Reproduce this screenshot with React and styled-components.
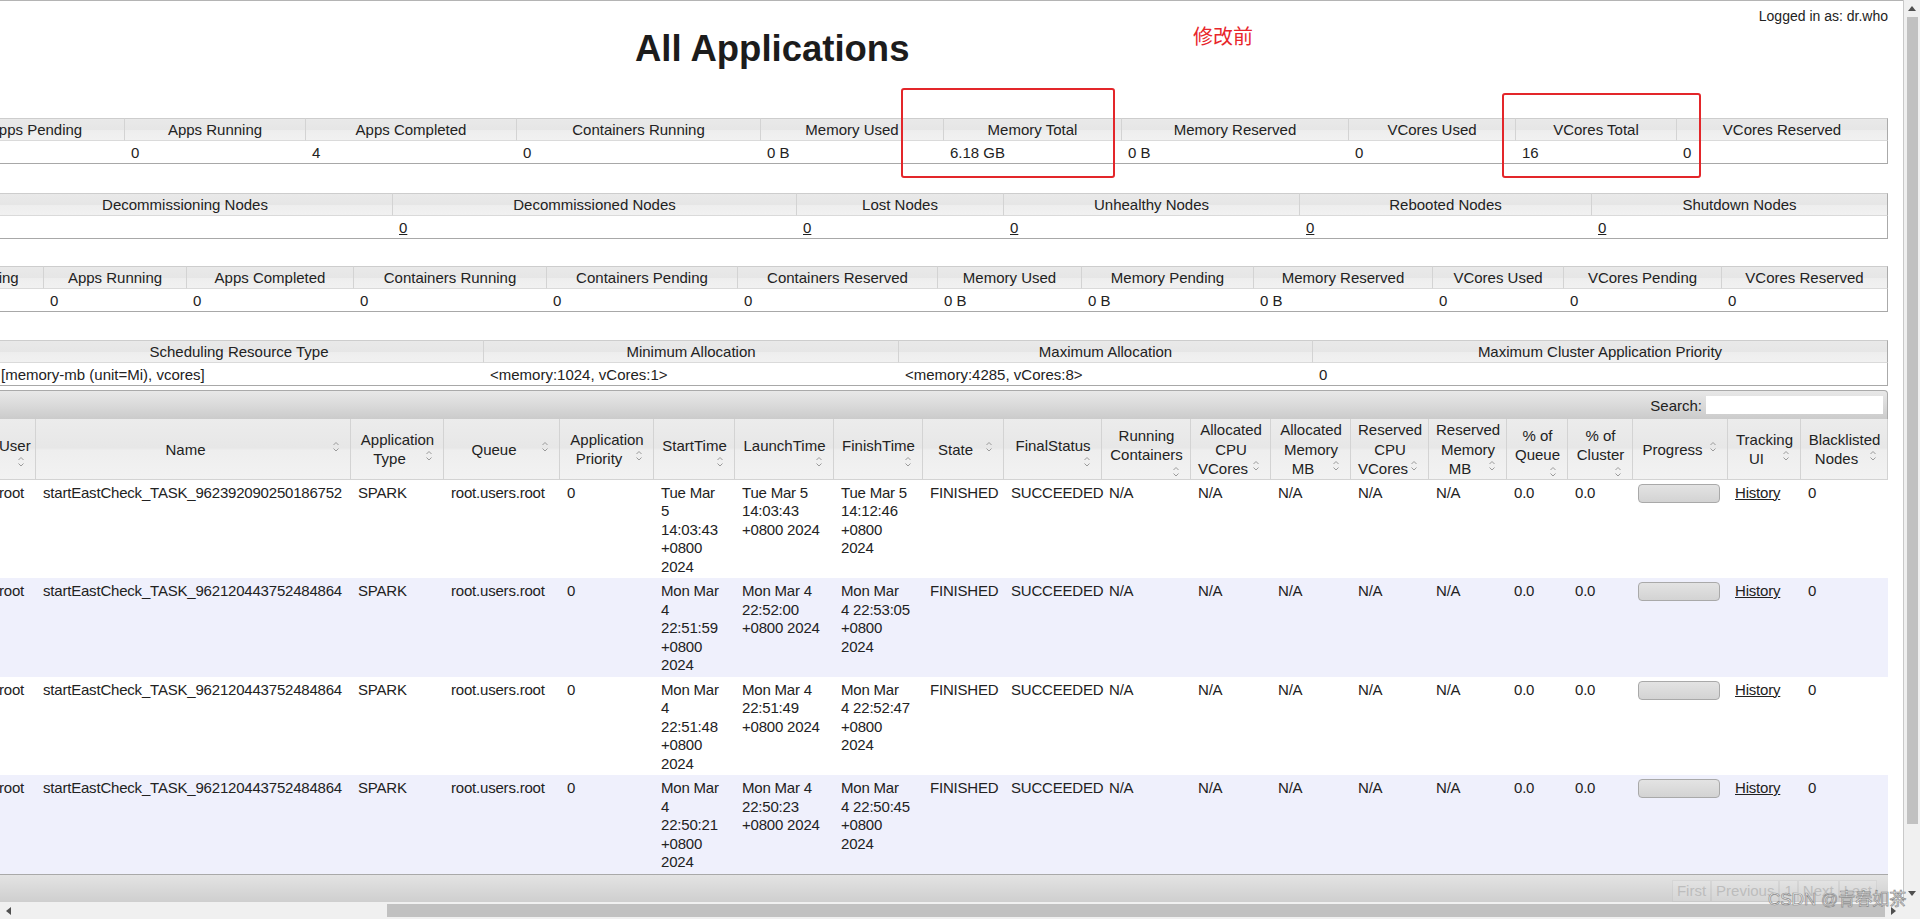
import React from 'react';
import styled, { createGlobalStyle } from 'styled-components';

const GlobalStyle = createGlobalStyle`
  html, body {
    margin: 0;
    padding: 0;
    background: #fff;
    overflow: hidden;
  }
  body {
    font-family: "Liberation Sans", "Noto Sans CJK SC", Arial, sans-serif;
    font-size: 15px;
    color: #222;
  }
`;

// outer frame: page + browser scrollbars
const Screen = styled.div`
  position: relative;
  width: 1920px;
  height: 919px;
  display: grid;
  grid-template-columns: 1903px 17px;
  grid-template-rows: 902px 17px;
  overflow: hidden;
`;

const Viewport = styled.div`
  position: relative;
  overflow: hidden;
  border-top: 1px solid #b4b4b4;
  background: #fff;
`;

// the page is scrolled to the right, so its left part sits outside the view
const Page = styled.div`
  width: 2350px;
  margin-left: -462px;
`;

const Header = styled.div`
  height: 117px;
  display: flex;
  justify-content: space-between;
  align-items: flex-start;
`;

const Title = styled.h1`
  margin: 28px 0 0 1097px;
  font-size: 36.5px;
  line-height: 40px;
  font-weight: bold;
  color: #1c1c1c;
`;

const LoggedIn = styled.div`
  margin-top: 7px;
  font-size: 14px;
  line-height: 16px;
  color: #222;
`;

const InfoTable = styled.table`
  width: 100%;
  table-layout: fixed;
  border-collapse: separate;
  border-spacing: 0;
  margin-bottom: ${(p) => p.$mb}px;
`;

const Col = styled.col`
  width: ${(p) => p.$w}px;
`;

const InfoHead = styled.th`
  font-weight: normal;
  font-size: 15px;
  line-height: 20px;
  padding: 1px 4px 0;
  text-align: center;
  white-space: nowrap;
  color: #222;
  background: linear-gradient(#e9e9e9, #e6e6e6 50%, #eeeeee 55%, #f1f1f1);
  border-top: 1px solid #cdcdcd;
  border-bottom: 1px solid #dadada;
  border-left: 1px solid #d3d3d3;
  &:last-child {
    border-right: 1px solid #aaa;
  }
`;

const InfoCell = styled.td`
  line-height: 20px;
  padding: 2px 7px 0;
  white-space: nowrap;
  overflow: hidden;
  background: #fff;
  border-bottom: 1px solid #a8a8a8;
  &:last-child {
    border-right: 1px solid #aaa;
  }
`;

const NodeLink = styled.a`
  color: #222;
  text-decoration: underline;
`;

const Toolbar = styled.div`
  height: 28px;
  display: flex;
  align-items: center;
  justify-content: flex-end;
  gap: 4px;
  padding-right: 4px;
  border: 1px solid #aaa;
  border-bottom: none;
  border-radius: 4px 4px 0 0;
  background: linear-gradient(#e8e8e8, #dadada 50%, #cbcbcb);
`;

const SearchInput = styled.input`
  width: 173px;
  height: 18px;
  border: none;
  padding: 0 2px;
  background: #fff;
  outline: none;
`;

const GridTable = styled.table`
  width: 100%;
  table-layout: fixed;
  border-collapse: separate;
  border-spacing: 0;
`;

const GridHead = styled.th`
  font-weight: normal;
  line-height: 19.5px;
  padding: 1px 6px 0 7px;
  text-align: center;
  vertical-align: middle;
  white-space: nowrap;
  color: #222;
  background: linear-gradient(#ececec, #e7e7e7 48%, #eeeeee 52%, #f2f2f2);
  border-left: 1px solid #d3d3d3;
  border-bottom: 1px solid #d3d3d3;
  &:last-child {
    border-right: 1px solid #d3d3d3;
  }
`;

const Line = styled.div`
  white-space: nowrap;
`;

const SortIcon = styled.span`
  float: right;
  display: block;
  width: 16px;
  height: 16px;
  margin-bottom: ${(p) => (p.$own ? -8 : 0)}px;
`;

const GridRow = styled.tr`
  background: ${(p) => (p.$even ? '#eff0fc' : '#fff')};
`;

const GridCell = styled.td`
  vertical-align: top;
  line-height: 18.5px;
  padding: 4px 7px 2px 8px;
  white-space: nowrap;
  letter-spacing: -0.2px;
`;

const ProgressBar = styled.div`
  width: 80px;
  height: 17px;
  margin-left: -2px;
  border: 1px solid #a9a9a9;
  border-radius: 4px;
  background: linear-gradient(#e3e3e3, #d3d3d3);
`;

const HistoryLink = styled.a`
  color: #222;
  text-decoration: underline;
`;

const Footer = styled.div`
  height: 30px;
  display: flex;
  justify-content: flex-end;
  align-items: flex-start;
  padding: 5px 11px 0 0;
  border-top: 1px solid #a9a9a9;
  background: linear-gradient(#e3e3e3, #d6d6d6 50%, #c9c9c9);
`;

const PageButton = styled.span`
  line-height: 20px;
  padding: 0 4px;
  color: #bdbdbd;
  border: 1px solid rgba(0, 0, 0, 0.05);
  background: rgba(255, 255, 255, 0.12);
`;

const VScroll = styled.div`
  display: flex;
  flex-direction: column;
  align-items: center;
  background: #f0f0f0;
  border-left: 1px solid #c9c9c9;
`;

const VThumb = styled.div`
  width: 11px;
  height: 807px;
  background: #c1c1c1;
`;

const HScroll = styled.div`
  display: flex;
  align-items: center;
  background: #f0f0f0;
`;

const HThumb = styled.div`
  width: 1498px;
  height: 13px;
  margin-left: 370px;
  background: #c1c1c1;
`;

const Arrow = styled.div`
  width: 17px;
  height: 17px;
  flex: none;
  display: flex;
  align-items: center;
  justify-content: center;
  margin-top: ${(p) => (p.$end ? 'auto' : '0')};
`;

const Corner = styled.div`
  background: #f0f0f0;
`;

// annotations drawn over the screenshot
const RedBox = styled.div`
  position: absolute;
  left: ${(p) => p.$x}px;
  top: ${(p) => p.$y}px;
  width: ${(p) => p.$w}px;
  height: ${(p) => p.$h}px;
  border: 2px solid #e3262a;
  border-radius: 3px;
  pointer-events: none;
`;

const RedNote = styled.div`
  position: absolute;
  left: 1193px;
  top: 24px;
  font-family: "Noto Sans CJK SC", sans-serif;
  font-size: 20px;
  line-height: 22px;
  color: #e8262b;
`;

const Watermark = styled.div`
  position: absolute;
  left: 1768px;
  top: 889px;
  font-family: "Liberation Sans", "Noto Sans CJK SC", sans-serif;
  font-size: 17px;
  line-height: 22px;
  color: rgba(250, 250, 250, 0.85);
  -webkit-text-stroke: 0.7px #8a8a8a;
  pointer-events: none;
`;

const clusterMetrics = [
  ['Apps Submitted', 408, '4'],
  ['Apps Pending', 178, '0'],
  ['Apps Running', 181, '0'],
  ['Apps Completed', 211, '4'],
  ['Containers Running', 244, '0'],
  ['Memory Used', 183, '0 B'],
  ['Memory Total', 178, '6.18 GB'],
  ['Memory Reserved', 227, '0 B'],
  ['VCores Used', 167, '0'],
  ['VCores Total', 161, '16'],
  ['VCores Reserved', 212, '0'],
];

const nodeMetrics = [
  ['Active Nodes', 439, '1'],
  ['Decommissioning Nodes', 415, '0'],
  ['Decommissioned Nodes', 404, '0'],
  ['Lost Nodes', 207, '0'],
  ['Unhealthy Nodes', 296, '0'],
  ['Rebooted Nodes', 292, '0'],
  ['Shutdown Nodes', 297, '0'],
];

const userMetrics = [
  ['Apps Submitted', 362, '0'],
  ['Apps Pending', 143, '0'],
  ['Apps Running', 143, '0'],
  ['Apps Completed', 167, '0'],
  ['Containers Running', 193, '0'],
  ['Containers Pending', 191, '0'],
  ['Containers Reserved', 200, '0'],
  ['Memory Used', 144, '0 B'],
  ['Memory Pending', 172, '0 B'],
  ['Memory Reserved', 179, '0 B'],
  ['VCores Used', 131, '0'],
  ['VCores Pending', 158, '0'],
  ['VCores Reserved', 167, '0'],
];

const schedulerMetrics = [
  ['Scheduler Type', 456, 'Capacity Scheduler'],
  ['Scheduling Resource Type', 489, '[memory-mb (unit=Mi), vcores]'],
  ['Minimum Allocation', 415, '<memory:1024, vCores:1>'],
  ['Maximum Allocation', 414, '<memory:4285, vCores:8>'],
  ['Maximum Cluster Application Priority', 576, '0'],
];

const columns = [
  { w: 453, lines: ['ID'] },
  { w: 44, lines: ['User'], own: true },
  { w: 315, lines: ['Name'] },
  { w: 93, lines: ['Application', 'Type'] },
  { w: 116, lines: ['Queue'] },
  { w: 94, lines: ['Application', 'Priority'] },
  { w: 81, lines: ['StartTime'], own: true },
  { w: 99, lines: ['LaunchTime'], own: true },
  { w: 89, lines: ['FinishTime'], own: true },
  { w: 81, lines: ['State'] },
  { w: 98, lines: ['FinalStatus'], own: true },
  { w: 89, lines: ['Running', 'Containers'], own: true },
  { w: 80, lines: ['Allocated', 'CPU', 'VCores'] },
  { w: 80, lines: ['Allocated', 'Memory', 'MB'] },
  { w: 78, lines: ['Reserved', 'CPU', 'VCores'] },
  { w: 78, lines: ['Reserved', 'Memory', 'MB'] },
  { w: 61, lines: ['% of', 'Queue'], own: true },
  { w: 65, lines: ['% of', 'Cluster'], own: true },
  { w: 95, lines: ['Progress'] },
  { w: 73, lines: ['Tracking', 'UI'] },
  { w: 88, lines: ['Blacklisted', 'Nodes'] },
];

const apps = [
  {
    id: 'application_1709534455412_0011',
    name: 'startEastCheck_TASK_962392090250186752',
    start: ['Tue Mar', '5', '14:03:43', '+0800', '2024'],
    launch: ['Tue Mar 5', '14:03:43', '+0800 2024'],
    finish: ['Tue Mar 5', '14:12:46', '+0800', '2024'],
  },
  {
    id: 'application_1709534455412_0010',
    name: 'startEastCheck_TASK_962120443752484864',
    start: ['Mon Mar', '4', '22:51:59', '+0800', '2024'],
    launch: ['Mon Mar 4', '22:52:00', '+0800 2024'],
    finish: ['Mon Mar', '4 22:53:05', '+0800', '2024'],
  },
  {
    id: 'application_1709534455412_0009',
    name: 'startEastCheck_TASK_962120443752484864',
    start: ['Mon Mar', '4', '22:51:48', '+0800', '2024'],
    launch: ['Mon Mar 4', '22:51:49', '+0800 2024'],
    finish: ['Mon Mar', '4 22:52:47', '+0800', '2024'],
  },
  {
    id: 'application_1709534455412_0008',
    name: 'startEastCheck_TASK_962120443752484864',
    start: ['Mon Mar', '4', '22:50:21', '+0800', '2024'],
    launch: ['Mon Mar 4', '22:50:23', '+0800 2024'],
    finish: ['Mon Mar', '4 22:50:45', '+0800', '2024'],
  },
];

const SortGlyph = () => (
  <svg width="16" height="16" viewBox="0 0 16 16">
    <polyline points="5.5,5 8,2.5 10.5,5" fill="none" stroke="#9a9a9a" strokeWidth="1" />
    <polyline points="5.5,8.5 8,11 10.5,8.5" fill="none" stroke="#9a9a9a" strokeWidth="1" />
  </svg>
);

const Tri = ({ dir }) => {
  const pts = {
    up: '0,5 4,0 8,5',
    down: '0,0 4,5 8,0',
    left: '5,0 0,4 5,8',
    right: '0,0 5,4 0,8',
  }[dir];
  const vertical = dir === 'up' || dir === 'down';
  return (
    <svg width={vertical ? 8 : 5} height={vertical ? 5 : 8}>
      <polygon points={pts} fill="#505050" />
    </svg>
  );
};

const MetricsTable = ({ items, mb, link }) => (
  <InfoTable $mb={mb}>
    <colgroup>
      {items.map(([label, w]) => (
        <Col key={label} $w={w} />
      ))}
    </colgroup>
    <thead>
      <tr>
        {items.map(([label]) => (
          <InfoHead key={label}>{label}</InfoHead>
        ))}
      </tr>
    </thead>
    <tbody>
      <tr>
        {items.map(([label, , value]) => (
          <InfoCell key={label}>{link ? <NodeLink>{value}</NodeLink> : value}</InfoCell>
        ))}
      </tr>
    </tbody>
  </InfoTable>
);

const HeadCell = ({ lines, own }) => {
  if (own) {
    return (
      <GridHead>
        {lines.map((l) => (
          <Line key={l}>{l}</Line>
        ))}
        <SortIcon $own>
          <SortGlyph />
        </SortIcon>
      </GridHead>
    );
  }
  const last = lines[lines.length - 1];
  return (
    <GridHead>
      {lines.slice(0, -1).map((l) => (
        <Line key={l}>{l}</Line>
      ))}
      <Line>
        <SortIcon>
          <SortGlyph />
        </SortIcon>
        {last}
      </Line>
    </GridHead>
  );
};

const Lines = ({ value }) =>
  Array.isArray(value) ? value.map((l, i) => <Line key={i}>{l}</Line>) : value;

const AppRow = ({ app, even }) => {
  const cells = [
    app.id,
    'root',
    app.name,
    'SPARK',
    'root.users.root',
    '0',
    app.start,
    app.launch,
    app.finish,
    'FINISHED',
    'SUCCEEDED',
    'N/A',
    'N/A',
    'N/A',
    'N/A',
    'N/A',
    '0.0',
    '0.0',
  ];
  return (
    <GridRow $even={even}>
      {cells.map((c, i) => (
        <GridCell key={i}>
          <Lines value={c} />
        </GridCell>
      ))}
      <GridCell>
        <ProgressBar />
      </GridCell>
      <GridCell>
        <HistoryLink>History</HistoryLink>
      </GridCell>
      <GridCell>0</GridCell>
    </GridRow>
  );
};

const App = () => (
  <>
    <GlobalStyle />
    <Screen>
      <Viewport>
        <Page>
          <Header>
            <Title>All Applications</Title>
            <LoggedIn>Logged in as: dr.who</LoggedIn>
          </Header>
          <MetricsTable items={clusterMetrics} mb={29} />
          <MetricsTable items={nodeMetrics} mb={27} link />
          <MetricsTable items={userMetrics} mb={28} />
          <MetricsTable items={schedulerMetrics} mb={4} />

          <Toolbar>
            <span>Search:</span>
            <SearchInput />
          </Toolbar>
          <GridTable>
            <colgroup>
              {columns.map((c, i) => (
                <Col key={i} $w={c.w} />
              ))}
            </colgroup>
            <thead>
              <tr>
                {columns.map((c, i) => (
                  <HeadCell key={i} lines={c.lines} own={c.own} />
                ))}
              </tr>
            </thead>
            <tbody>
              {apps.map((a, i) => (
                <AppRow key={a.id} app={a} even={i % 2 === 1} />
              ))}
            </tbody>
          </GridTable>
          <Footer>
            <PageButton>First</PageButton>
            <PageButton>Previous</PageButton>
            <PageButton>1</PageButton>
            <PageButton>Next</PageButton>
            <PageButton>Last</PageButton>
          </Footer>
        </Page>

        <RedNote>修改前</RedNote>
        <RedBox $x={901} $y={87} $w={210} $h={86} />
        <RedBox $x={1502} $y={92} $w={195} $h={81} />
      </Viewport>

      <VScroll>
        <Arrow>
          <Tri dir="up" />
        </Arrow>
        <VThumb />
        <Arrow $end>
          <Tri dir="down" />
        </Arrow>
      </VScroll>

      <HScroll>
        <Arrow>
          <Tri dir="left" />
        </Arrow>
        <HThumb />
        <Arrow>
          <Tri dir="right" />
        </Arrow>
      </HScroll>
      <Corner />

      <Watermark>CSDN @青春如茶</Watermark>
    </Screen>
  </>
);

export default App;
